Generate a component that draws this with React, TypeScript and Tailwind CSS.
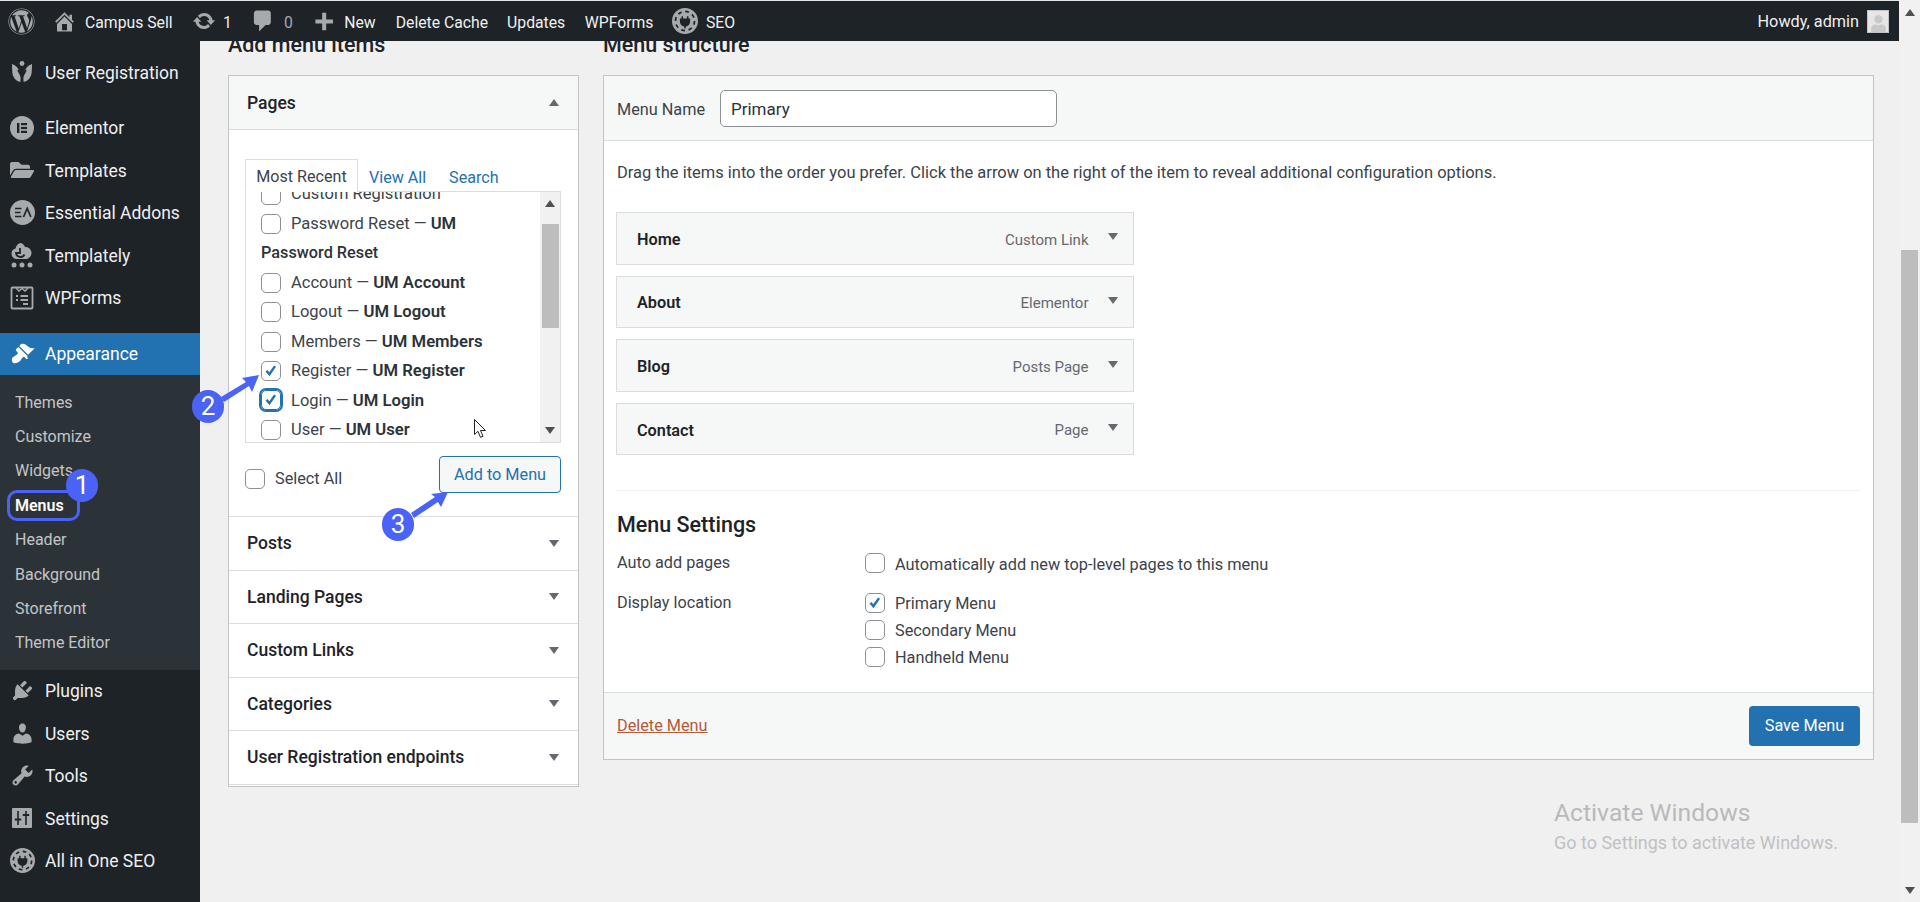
import type { ReactNode } from 'react'
import { FaWordpress, FaUser, FaFolderOpen } from 'react-icons/fa'

const font = { fontFamily: 'Roboto, "Liberation Sans", sans-serif' }

// dashicons, 20x20 grid
const dash = {
  brush:
    'M14.48 11.06L7.41 3.99l1.5-1.5c.5-.56 2.3-.47 3.51.32 1.21.8 1.43 1.28 2.91 2.1 1.18.64 2.45 1.26 4.45.85zm-.71.71L6.7 4.7 4.93 6.47c-.39.39-.39 1.02 0 1.41l1.06 1.06c.39.39.39 1.03 0 1.42-.6.6-1.43 1.11-2.21 1.69-.35.26-.7.53-1.01.84C1.43 13.23.98 15.93 2.2 17.15c1.22 1.22 3.92.77 5.56-.88.31-.31.58-.66.84-1.01.58-.78 1.09-1.61 1.69-2.21.39-.39 1.03-.39 1.42 0l1.06 1.06c.39.39 1.02.39 1.41 0z',
  plugin:
    'M13.11 4.36L9.87 7.6 8 5.73l3.24-3.24c.35-.34 1.05-.2 1.56.32.52.51.66 1.21.31 1.55zm-8 1.77l.91-1.12 9.01 9.01-1.19.84c-.71.71-2.63 1.16-3.82 1.16H6.14L4.9 17.26c-.59.59-1.54.59-2.12 0-.59-.58-.59-1.53 0-2.12l1.24-1.24v-3.88c0-1.13.52-3.13 1.09-3.89zm7.26 3.97l3.24-3.24c.34-.35 1.04-.21 1.55.31.52.51.66 1.21.31 1.55l-3.24 3.25z',
  users:
    'M10 9.25c-2.27 0-2.73-3.44-2.73-3.44C7 4.02 7.82 2 9.97 2c2.16 0 2.98 2.02 2.71 3.81 0 0-.41 3.44-2.68 3.44zm0 2.57L12.72 10c2.39 0 4.52 2.33 4.52 4.53v2.49s-3.65 1.13-7.24 1.13c-3.65 0-7.24-1.13-7.24-1.13v-2.49c0-2.25 1.94-4.48 4.47-4.48z',
  tools:
    'M16.68 9.77c-1.34 1.34-3.3 1.67-4.95.99l-5.41 6.52c-.99.99-2.59.99-3.57 0-.99-.98-.99-2.58 0-3.57l6.52-5.42c-.68-1.65-.35-3.61.99-4.95 1.28-1.28 3.12-1.62 4.72-1.06l-2.89 2.89 2.82 2.82 2.89-2.87c.53 1.58.18 3.41-1.12 4.65zM3.81 16.21c.4.39 1.03.39 1.42 0 .4-.4.4-1.03 0-1.43-.39-.39-1.02-.39-1.42 0-.39.4-.39 1.03 0 1.43z',
  home: 'M16 8.5l1.53 1.53-1.06 1.06L10 4.62l-6.47 6.47-1.06-1.06L10 2.5l4 4v-2h2v4zm-6-2.46l6 5.99V18H4v-5.97zM12 17v-5H8v5h4z',
  update:
    'M10.2 3.28c3.53 0 6.43 2.61 6.92 6h2.08l-3.5 4-3.5-4h2.32c-.45-1.97-2.21-3.45-4.32-3.45-1.45 0-2.73.71-3.54 1.78L4.95 5.66C6.23 4.2 8.11 3.28 10.2 3.28zm-.4 13.44c-3.52 0-6.43-2.61-6.92-6H.8l3.5-4c1.17 1.33 2.33 2.67 3.5 4H5.48c.45 1.97 2.21 3.45 4.32 3.45 1.45 0 2.73-.71 3.54-1.77l1.71 1.95c-1.28 1.46-3.15 2.37-5.25 2.37z',
  comment: 'M5 2h9c1.1 0 2 .9 2 2v7c0 1.1-.9 2-2 2h-2l-5 5v-5H5c-1.1 0-2-.9-2-2V4c0-1.1.9-2 2-2z',
  plus: 'M17 7v3h-5v5H9v-5H4V7h5V2h3v5h5z',
}

function Dash({ d, size = 25, className = 'text-[#a7aaad]' }: { d: string; size?: number; className?: string }) {
  return (
    <svg viewBox="0 0 20 20" width={size} height={size} className={`shrink-0 ${className}`} fill="currentColor">
      <path d={d} />
    </svg>
  )
}

function UrIcon() {
  return (
    <svg viewBox="0 0 24 24" className="h-[24px] w-[24px]" fill="#a7aaad">
      <circle cx="12" cy="3.5" r="2.4" />
      <path d="M2 4c3 1 5.5 3 7 6 1 2 1.6 5 1.6 8.5L10.4 22C5.5 21 2.6 17 2.3 12 2.1 9 2 6.5 2 4z" />
      <path d="M22 4c-3 1-5.5 3-7 6-1 2-1.6 5-1.6 8.5l.2 3.5c4.9-1 7.8-5 8.1-10 .2-3 .3-5.5.3-8z" />
      <path d="M8 9l4 5 4-5 .5 2-4.5 8-4.5-8z" fill="#1d2327" />
    </svg>
  )
}

function ElementorIcon() {
  return (
    <svg viewBox="0 0 24 24" className="h-[24px] w-[24px]">
      <circle cx="12" cy="12" r="12" fill="#a7aaad" />
      <rect x="7" y="7" width="2.4" height="10" fill="#1d2327" />
      <rect x="11" y="7" width="6" height="2.2" fill="#1d2327" />
      <rect x="11" y="10.9" width="6" height="2.2" fill="#1d2327" />
      <rect x="11" y="14.8" width="6" height="2.2" fill="#1d2327" />
    </svg>
  )
}

function EaIcon() {
  return (
    <svg viewBox="0 0 25 25" className="h-[25px] w-[25px]">
      <circle cx="12.5" cy="12.5" r="12.5" fill="#a7aaad" />
      <path d="M5 8.5h6.5M5 12.5h5.5M5 16.5h6.5" stroke="#1d2327" strokeWidth="1.7" fill="none" />
      <path d="M13.5 17l3.7-8.5 3.7 8.5" stroke="#1d2327" strokeWidth="1.7" fill="none" />
    </svg>
  )
}

function TemplatelyIcon() {
  return (
    <svg viewBox="0 0 24 26" className="h-[26px] w-[24px]" fill="#a7aaad">
      <path d="M10 1c2 0 4 1.5 5 4 3.5-.2 6.5 2.5 6.5 6s-3 6-6 6H7c-3.5 0-5.5-2.5-5.5-5.5 0-2.5 1.5-4.5 4-5C6 4 8 1.5 10 1z" />
      <path d="M10 6v5H6a4.5 4.5 0 0 0 8.5 1.5" stroke="#1d2327" strokeWidth="1.8" fill="none" />
      <circle cx="4" cy="23" r="2.5" />
      <circle cx="12" cy="23" r="2.5" />
      <circle cx="20" cy="23" r="2.5" />
    </svg>
  )
}

function WpFormsIcon() {
  return (
    <svg viewBox="0 0 24 24" className="h-[24px] w-[24px]" fill="none" stroke="#a7aaad" strokeWidth="1.8">
      <rect x="1.5" y="1.5" width="21" height="21" rx="1" />
      <path d="M6 2l3 3 3-2.5L15 5l3-3" strokeWidth="1.3" />
      <path d="M6 10h2M10.5 10h7.5M6 14h2M10.5 14h7.5M13 18h5" />
    </svg>
  )
}

function SettingsIcon() {
  return (
    <svg viewBox="0 0 20 20" className="h-[20px] w-[20px]">
      <rect width="20" height="20" rx="1" fill="#a7aaad" />
      <path d="M6 3v14M14 3v14" stroke="#1d2327" strokeWidth="1.6" />
      <path d="M2.8 11.5h6.4M10.8 7h6.4" stroke="#1d2327" strokeWidth="1.8" />
    </svg>
  )
}

function SeoIcon({ size = 25 }: { size?: number }) {
  return (
    <svg viewBox="0 0 24 24" width={size} height={size} className="shrink-0">
      <circle cx="12" cy="12" r="12" fill="#a7aaad" />
      <circle cx="12" cy="12" r="8.8" fill="none" stroke="#1d2327" strokeWidth="1.6" strokeDasharray="3.5 3.4" />
      <path d="M9.5 7.5v3M14.5 7.5v3M8 10.5h8v2a4 4 0 0 1-8 0zM12 16v3" stroke="#1d2327" strokeWidth="1.4" fill="#1d2327" />
    </svg>
  )
}

function Tri({ up = false, className = '' }: { up?: boolean; className?: string }) {
  return (
    <svg viewBox="0 0 10 7" className={`h-[7px] w-[10px] shrink-0 ${className}`} fill="currentColor">
      <path d={up ? 'M5 0l5 7H0z' : 'M0 0h10L5 7z'} />
    </svg>
  )
}

function Check({ checked = false, focus = false }: { checked?: boolean; focus?: boolean }) {
  return (
    <span
      className={`flex h-[20px] w-[20px] shrink-0 items-center justify-center rounded-[5px] bg-white ${
        focus ? 'outline-2 outline-[#2271b1] border border-[#2271b1]' : 'border border-[#8c8f94]'
      }`}
    >
      {checked && (
        <svg viewBox="0 0 20 20" className="h-[20px] w-[20px]" fill="#2271b1">
          <path d="M8.3 15.7L4 10.6l2-1.7 2.1 2.5 5.3-7.5 2.2 1.5z" />
        </svg>
      )}
    </span>
  )
}

const menuTop: { label: string; icon: ReactNode; mt?: string }[] = [
  { label: 'User Registration', icon: <UrIcon /> },
  { label: 'Elementor', icon: <ElementorIcon />, mt: 'mt-[13px]' },
  { label: 'Templates', icon: <FaFolderOpen className="h-[22px] w-[24px] text-[#a7aaad]" /> },
  { label: 'Essential Addons', icon: <EaIcon /> },
  { label: 'Templately', icon: <TemplatelyIcon /> },
  { label: 'WPForms', icon: <WpFormsIcon /> },
]

const menuBottom: { label: string; icon: ReactNode }[] = [
  { label: 'Plugins', icon: <Dash d={dash.plugin} /> },
  { label: 'Users', icon: <Dash d={dash.users} /> },
  { label: 'Tools', icon: <Dash d={dash.tools} /> },
  { label: 'Settings', icon: <SettingsIcon /> },
  { label: 'All in One SEO', icon: <SeoIcon /> },
]

const subItems = ['Themes', 'Customize', 'Widgets', 'Menus', 'Header', 'Background', 'Storefront', 'Theme Editor']

function MenuRow({ label, icon, mt = '' }: { label: string; icon: ReactNode; mt?: string }) {
  return (
    <div className={`flex h-[42.5px] items-center ${mt}`}>
      <span className="flex w-[45px] shrink-0 items-center justify-center pr-[1px]">{icon}</span>
      <span className="mt-[1px] text-[17.5px] text-[#f0f0f1]">{label}</span>
    </div>
  )
}

function Sidebar() {
  return (
    <aside className="w-[200px] shrink-0 bg-[#1d2327] pt-[10px]">
      {menuTop.map((m) => (
        <MenuRow key={m.label} {...m} />
      ))}
      <div className="mt-[13.5px] flex h-[42px] items-center bg-[#2271b1]">
        <span className="flex w-[45px] shrink-0 items-center justify-center pr-[1px]">
          <Dash d={dash.brush} className="text-white" />
        </span>
        <span className="mt-[2px] text-[17.5px] text-white">Appearance</span>
      </div>
      <div className="bg-[#2c3338] pb-[9px] pt-[11px]">
        {subItems.map((s) => (
          <div
            key={s}
            className={`flex h-[34.4px] items-center pl-[15px] text-[16px] ${
              s === 'Menus' ? 'font-semibold text-white' : 'text-[#c3c5c7]'
            }`}
          >
            {s}
          </div>
        ))}
      </div>
      {menuBottom.map((m) => (
        <MenuRow key={m.label} {...m} />
      ))}
    </aside>
  )
}

function BarText({ className = '', children }: { className?: string; children: ReactNode }) {
  return <span className={`mt-[3px] ${className}`}>{children}</span>
}

function AdminBar() {
  return (
    <header className="flex h-[40px] shrink-0 items-center bg-[#1d2327] text-[15.75px] text-[#f0f0f1]">
      <FaWordpress className="ml-[8px] h-[27px] w-[27px] text-[#a7aaad]" />
      <span className="ml-[17px]">
        <Dash d={dash.home} />
      </span>
      <BarText className="ml-[8px]">Campus Sell</BarText>
      <span className="ml-[19px]">
        <Dash d={dash.update} size={24} />
      </span>
      <BarText className="ml-[7.5px]">1</BarText>
      <span className="ml-[18px]">
        <Dash d={dash.comment} size={26} />
      </span>
      <BarText className="ml-[8px] text-[#a7aaad]">0</BarText>
      <span className="ml-[17px] mt-[4px]">
        <Dash d={dash.plus} size={27} />
      </span>
      <BarText className="ml-[7.5px]">New</BarText>
      <BarText className="ml-[20px]">Delete Cache</BarText>
      <BarText className="ml-[19px]">Updates</BarText>
      <BarText className="ml-[19.5px]">WPForms</BarText>
      <span className="ml-[18.5px]">
        <SeoIcon size={26} />
      </span>
      <BarText className="ml-[8px]">SEO</BarText>
      <BarText className="ml-auto text-[16.25px]">Howdy, admin</BarText>
      <span className="ml-[8px] mr-[10px] flex h-[23px] w-[22px] items-end justify-center overflow-hidden border border-[#c3c4c7] bg-[#e6e6e6]">
        <FaUser className="h-[17px] w-[17px] text-[#c9c9c9]" />
      </span>
    </header>
  )
}

const pageRows: { text: string; bold?: string; checked?: boolean; focus?: boolean }[] = [
  { text: 'Custom Registration' },
  { text: 'Password Reset — ', bold: 'UM' },
]
const pageRows2: { text: string; bold?: string; checked?: boolean; focus?: boolean }[] = [
  { text: 'Account — ', bold: 'UM Account' },
  { text: 'Logout — ', bold: 'UM Logout' },
  { text: 'Members — ', bold: 'UM Members' },
  { text: 'Register — ', bold: 'UM Register', checked: true },
  { text: 'Login — ', bold: 'UM Login', checked: true, focus: true },
  { text: 'User — ', bold: 'UM User' },
]

function PageRow({ text, bold, checked, focus }: { text: string; bold?: string; checked?: boolean; focus?: boolean }) {
  return (
    <div className="flex h-[29.4px] shrink-0 items-center pl-[15px]">
      <Check checked={checked} focus={focus} />
      <span className="ml-[10px] text-[16.5px] text-[#3c434a]">
        {text}
        {bold && <b className="text-[16.7px] font-semibold text-[#2c3338]">{bold}</b>}
      </span>
    </div>
  )
}

function Accordion({ title }: { title: string }) {
  return (
    <div className="flex h-[53.5px] items-center justify-between border-t border-[#dcdcde] pl-[18px] pr-[19px]">
      <span className="text-[17.5px] font-medium text-[#1d2327]">{title}</span>
      <Tri className="text-[#646970]" />
    </div>
  )
}

function AddItems() {
  return (
    <section className="w-[351px] shrink-0">
      <h2 className="-mt-[6px] mb-[20px] h-[20px] text-[21.5px] font-medium leading-[20px] text-[#1d2327]">Add menu items</h2>
      <div className="border border-[#c3c4c7] bg-white pb-[1px]">
        <div className="flex h-[54px] items-center justify-between border-b border-[#dcdcde] bg-[#f6f7f7] pl-[18px] pr-[19px]">
          <span className="mt-[2px] text-[17.5px] font-medium text-[#1d2327]">Pages</span>
          <Tri up className="text-[#646970]" />
        </div>
        <div className="pb-[23px] pl-[16px] pr-[17px] pt-[30px]">
          <div className="flex h-[31px] items-center text-[16.1px]">
            <span className="z-10 flex h-[33px] w-[113px] items-center justify-center border border-b-white border-[#dcdcde] bg-white pt-[4px] text-[#3c434a]">
              Most Recent
            </span>
            <span className="ml-[11px] mt-[5px] text-[#2271b1]">View All</span>
            <span className="ml-[23px] mt-[5px] text-[#2271b1]">Search</span>
          </div>
          <div className="flex h-[252px] overflow-hidden border border-[#dcdcde] bg-white">
            <div className="min-w-0 flex-1">
              <div className="-mt-[12px]">
                {pageRows.map((r) => (
                  <PageRow key={r.text} {...r} />
                ))}
                <div className="flex h-[29.4px] items-center pl-[15px] text-[16.25px] font-medium text-[#2c3338]">Password Reset</div>
                {pageRows2.map((r) => (
                  <PageRow key={r.text} {...r} />
                ))}
              </div>
            </div>
            <div className="flex w-[20px] shrink-0 flex-col items-center bg-[#f1f1f1] text-[#505050]">
              <Tri up className="mt-[8px]" />
              <div className="mt-[17px] h-[104px] w-[17px] bg-[#bdbdbd]" />
              <Tri className="mt-auto mb-[8px]" />
            </div>
          </div>
          <div className="mt-[13px] flex items-start justify-between">
            <div className="mt-[11px] flex items-center">
              <Check />
              <span className="ml-[10px] text-[16.25px] text-[#3c434a]">Select All</span>
            </div>
            <button className="h-[37px] w-[122px] rounded-[4px] border border-[#2271b1] bg-[#f6f7f7] pt-[1px] text-[16.25px] text-[#2271b1]">
              Add to Menu
            </button>
          </div>
        </div>
        {['Posts', 'Landing Pages', 'Custom Links', 'Categories', 'User Registration endpoints'].map((t) => (
          <Accordion key={t} title={t} />
        ))}
        <div className="border-t border-[#dcdcde]" />
      </div>
    </section>
  )
}

const structure = [
  { title: 'Home', type: 'Custom Link' },
  { title: 'About', type: 'Elementor' },
  { title: 'Blog', type: 'Posts Page' },
  { title: 'Contact', type: 'Page' },
]

function MenuStructure() {
  return (
    <section className="min-w-0 flex-1">
      <h2 className="-mt-[6px] mb-[20px] h-[20px] text-[21.5px] font-medium leading-[20px] text-[#1d2327]">Menu structure</h2>
      <div className="border border-[#c3c4c7] bg-white text-[16.25px] text-[#3c434a]">
        <div className="flex h-[65px] items-center border-b border-[#dcdcde] bg-[#f6f7f7] pl-[13px]">
          <span className="mt-[4px] w-[103px] text-[#3c434a]">Menu Name</span>
          <div className="flex h-[37px] w-[337px] items-center rounded-[5px] border border-[#8c8f94] bg-white pl-[10px] pt-[4px] text-[17px] text-[#2c3338]">
            Primary
          </div>
        </div>
        <div className="px-[13px] pt-[21px]">
          <p className="h-[22px] text-[16.48px] leading-[22px]">
            Drag the items into the order you prefer. Click the arrow on the right of the item to reveal additional configuration options.
          </p>
          <div className="-ml-[1px] mt-[28px] w-[518px]">
            {structure.map((s) => (
              <div key={s.title} className="mb-[11.17px] flex h-[52.5px] items-center border border-[#dcdcde] bg-[#f6f7f7] pl-[20px] pr-[15px]">
                <span className="mt-[3px] flex-1 font-semibold text-[#1d2327]">{s.title}</span>
                <span className="mt-[3px] text-[15px] text-[#646970]">{s.type}</span>
                <Tri className="mb-[3px] ml-[19.5px] text-[#646970]" />
              </div>
            ))}
          </div>
          <div className="-ml-[1px] mt-[34.5px] border-t border-[#f0f0f1]" />
          <h3 className="mt-[20px] h-[28px] text-[21.5px] font-medium leading-[28px] text-[#1d2327]">Menu Settings</h3>
          <div className="mt-[14px] flex h-[20px]">
            <span className="w-[248px] leading-[20px]">Auto add pages</span>
            <div className="flex h-[20px] items-center">
              <Check />
              <span className="ml-[10px] mt-[5px] text-[16.35px]">Automatically add new top-level pages to this menu</span>
            </div>
          </div>
          <div className="mt-[20px] flex pb-[25px]">
            <span className="w-[248px] leading-[20px]">Display location</span>
            <div className="flex flex-col gap-[7px]">
              {['Primary Menu', 'Secondary Menu', 'Handheld Menu'].map((l, i) => (
                <div key={l} className="flex h-[20px] items-center">
                  <Check checked={i === 0} />
                  <span className="ml-[10px] mt-[3px]">{l}</span>
                </div>
              ))}
            </div>
          </div>
        </div>
        <div className="flex h-[67px] items-center justify-between border-t border-[#dcdcde] bg-[#f6f7f7] pl-[13px] pr-[13px]">
          <span className="text-[#b5593a] underline">Delete Menu</span>
          <button className="h-[40px] w-[111px] rounded-[4px] bg-[#2271b1] text-[16.25px] text-white">Save Menu</button>
        </div>
      </div>
    </section>
  )
}

function Badge({ n, className }: { n: number; className: string }) {
  return (
    <span
      className={`absolute flex h-[33px] w-[32px] items-center justify-center rounded-full bg-[#4a62f5] text-[26px] text-white ${className}`}
    >
      {n}
    </span>
  )
}

function Arrow({ className, d }: { className: string; d: string }) {
  return (
    <svg viewBox="0 0 60 40" className={`absolute h-[40px] w-[60px] ${className}`} fill="#4a62f5">
      <path d={d} />
    </svg>
  )
}

export default function App() {
  return (
    <div className="relative flex h-[902px] w-full overflow-hidden bg-[#f0f0f1]" style={font}>
      <div className="flex min-w-0 flex-1 flex-col">
        <div className="h-px shrink-0 bg-[#e3e5e8]" />
        <AdminBar />
        <div className="flex min-h-0 flex-1">
          <Sidebar />
          <main className="flex min-w-0 flex-1 gap-[24px] overflow-hidden pl-[28px] pr-[25px]">
            <AddItems />
            <MenuStructure />
          </main>
        </div>
        <div className="absolute bottom-[45px] left-[1554px] text-[#b9b9bb]">
          <div className="pb-[1px] text-[24.7px] leading-[30px]">Activate Windows</div>
          <div className="text-[18px] leading-[28px] text-[#c0c0c2]">Go to Settings to activate Windows.</div>
        </div>
      </div>
      <div className="flex w-[21px] shrink-0 flex-col items-center bg-[#f1f1f1] text-[#505050]">
        <Tri up className="mt-[9px]" />
        <div className="mt-[234px] h-[573px] w-[17px] bg-[#bdbdbd]" />
        <Tri className="mt-auto mb-[8px]" />
      </div>

      <div className="absolute left-[7px] top-[490px] h-[31px] w-[73px] rounded-[10px] border-[3px] border-[#4a62f5]" />
      <Badge n={1} className="left-[66px] top-[469px]" />
      <Badge n={2} className="left-[192px] top-[390px]" />
      <Badge n={3} className="left-[382px] top-[508px]" />
      <Arrow className="left-[210px] top-[368px]" d="M49 7L42 24 39 18 14 34 11 29 36 14 32 10z" />
      <Arrow className="left-[400px] top-[485px]" d="M48 7L41 22 38 17 14 33 11 28 35 12 31 9z" />
      <svg viewBox="0 0 12 19" className="absolute left-[474px] top-[419px] h-[19px] w-[12px]" fill="#fff" stroke="#222">
        <path d="M.5.5v15l3.5-3.2 2.5 6 2.5-1-2.5-5.8h5z" />
      </svg>
    </div>
  )
}
